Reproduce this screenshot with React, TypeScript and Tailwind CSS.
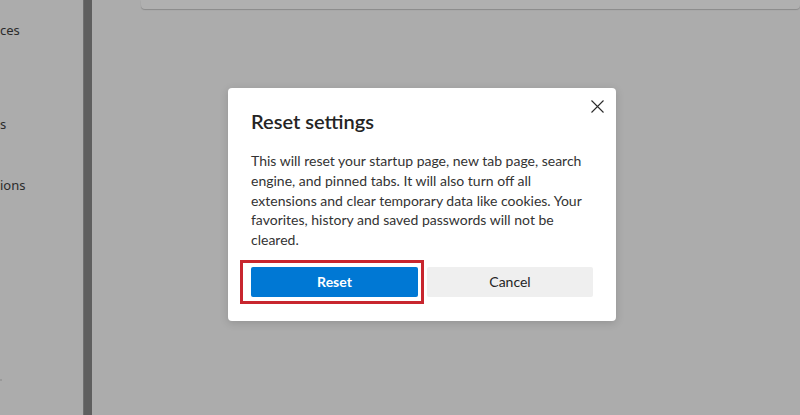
export default function App() {
  return (
    <div className="relative flex h-[415px] w-[800px] overflow-hidden bg-[#acacac] font-['Noto_Sans',sans-serif] text-[#1f1f1f]">
      {/* left nav, dimmed */}
      <div className="flex w-[83px] flex-col text-[13px] text-[#2b2b2b]">
        <div className="mt-[20px] h-[20px] leading-[20px]">ces</div>
        <div className="mt-[74px] h-[20px] leading-[20px]">s</div>
        <div className="mt-[41px] h-[20px] leading-[20px]">ions</div>
        <div className="ml-0 mt-[184px] h-[2px] w-[2px] bg-[#9a9a9a]" />
      </div>
      <div className="w-[9px] border-l border-[#707070] bg-[#5f5f5f]" />

      {/* content, dimmed */}
      <div className="flex-1">
        <div className="ml-[49px] h-[9px] rounded-b-[4px] bg-[#b0b0b0] shadow-[0_1px_1px_rgba(0,0,0,0.2)]" />
      </div>

      {/* dialog */}
      <div className="absolute left-[228px] top-[88px] w-[388px] rounded-[4px] bg-white px-[23px] pb-[24px] pt-[19px] font-['Lato',sans-serif] shadow-[0_2px_8px_rgba(0,0,0,0.15)]">
        <button className="absolute right-[12px] top-[11px] flex h-[14px] w-[14px] items-center justify-center">
          <svg width="13" height="13" viewBox="0 0 13 13" fill="none" stroke="#2b2b2b" strokeWidth="1.1">
            <path d="M0.5 0.5L12.5 12.5M12.5 0.5L0.5 12.5" />
          </svg>
        </button>
        <h2 className="text-[20px] font-semibold leading-[28px] text-[#242424]">Reset settings</h2>
        <p className="mt-[16px] text-[14px] leading-[19.75px] text-[#333]">
          This will reset your startup page, new tab page, search
          <br />
          engine, and pinned tabs. It will also turn off all
          <br />
          extensions and clear temporary data like cookies. Your
          <br />
          favorites, history and saved passwords will not be
          <br />
          cleared.
        </p>
        <div className="mt-[17px] flex gap-[9px]">
          <div className="relative">
            <button className="h-[30px] w-[167px] rounded-[2px] bg-[#0078d4] text-[14px] font-bold text-white">
              Reset
            </button>
            <div className="absolute -bottom-[7px] -left-[11px] -right-[6px] -top-[7px] border-[3px] border-[#c8262e]" />
          </div>
          <button className="h-[30px] w-[166px] rounded-[2px] bg-[#efefef] text-[14px] text-[#242424]">Cancel</button>
        </div>
      </div>
    </div>
  );
}
